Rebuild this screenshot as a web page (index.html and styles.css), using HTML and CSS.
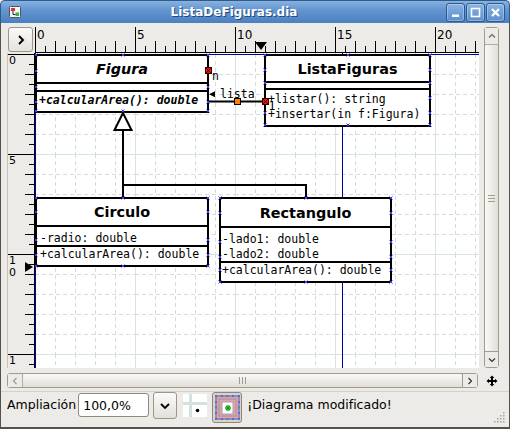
FILE: index.html
```html
<!DOCTYPE html>
<html lang="es">
<head>
<meta charset="utf-8">
<title>ListaDeFiguras.dia</title>
<link rel="stylesheet" href="styles.css">
</head>
<body>
<div class="window">
  <header class="titlebar">
    <svg class="app-icon" viewBox="0 0 14 14">
      <rect x="1.5" y="1.5" width="11" height="11" rx="1" fill="#f4f4f4" stroke="#555"/>
      <rect x="3" y="3" width="4" height="3" fill="#d33"/>
      <rect x="7.5" y="7.5" width="3.5" height="3.5" fill="#4a4"/>
      <path d="M5 6v3.5h2.5" stroke="#225" fill="none"/>
    </svg>
    <div class="title">ListaDeFiguras.dia</div>
    <div class="wm">
      <span class="wm-btn"><svg viewBox="0 0 15 15"><rect x="4" y="9.5" width="7" height="2.5" fill="#fff"/></svg></span>
      <span class="wm-btn"><svg viewBox="0 0 15 15"><rect x="3.5" y="3.5" width="8" height="8" fill="none" stroke="#fff" stroke-width="1.6"/></svg></span>
      <span class="wm-btn"><svg viewBox="0 0 15 15"><path d="M4 4l7 7M11 4l-7 7" stroke="#fff" stroke-width="2.3"/></svg></span>
    </div>
  </header>

  <div class="frame">
    <div class="workspace">
      <div class="corner-btn"><svg viewBox="0 0 10 10"><path d="M3 1l4 4-4 4" fill="none" stroke="#000" stroke-width="2"/></svg></div>

      <div class="hruler">
        <div class="hr-cell">0</div>
        <div class="hr-cell">5</div>
        <div class="hr-cell">10</div>
        <div class="hr-cell">15</div>
        <div class="hr-cell">20</div>
        <span class="hr-marker"></span>
      </div>

      <div class="vscroll">
        <div class="sb-btn sb-up"><svg viewBox="0 0 8 8"><path d="M1 5.5l3-3 3 3" fill="none" stroke="#666" stroke-width="1.2"/></svg></div>
        <div class="sb-thumb sb-thumb-v"><span class="grip-v"></span></div>
        <div class="sb-btn sb-down"><svg viewBox="0 0 8 8"><path d="M1 2.5l3 3 3-3" fill="none" stroke="#333" stroke-width="1.2"/></svg></div>
      </div>

      <div class="vruler">
        <div class="vr-cell">0</div>
        <div class="vr-cell">5</div>
        <div class="vr-cell">1<br>0</div>
        <div class="vr-cell">1</div>
        <span class="vr-marker"></span>
      </div>

      <div class="canvas">
        <svg class="grid" width="444" height="315">
          <defs>
            <pattern id="g" width="100" height="100" patternUnits="userSpaceOnUse" x="0" y="1">
              <path d="M20.5 0V100M40.5 0V100M60.5 0V100M80.5 0V100M0 20.5H100M0 40.5H100M0 60.5H100M0 80.5H100" stroke="#d2dede" stroke-dasharray="4 3" fill="none"/>
              <path d="M0.5 0V100M0 0.5H100" stroke="#d6e3e3" fill="none"/>
            </pattern>
          </defs>
          <rect width="444" height="315" fill="url(#g)"/>
          <path d="M0.5 0V315M0 1.5H444M307.5 0V315" stroke="#00009c" fill="none"/>
        </svg>

        <div class="uml figura">
          <div class="uml-name abstract">Figura</div>
          <div class="uml-attrs"></div>
          <div class="uml-ops"><div class="row abstract-op">+calcularArea(): double</div></div>
        </div>

        <div class="uml lista">
          <div class="uml-name">ListaFiguras</div>
          <div class="uml-attrs"></div>
          <div class="uml-ops">
            <div class="row">+listar(): string</div>
            <div class="row">+insertar(in f:Figura)</div>
          </div>
        </div>

        <div class="uml circulo">
          <div class="uml-name">Circulo</div>
          <div class="uml-attrs"><div class="row">-radio: double</div></div>
          <div class="uml-ops"><div class="row">+calcularArea(): double</div></div>
        </div>

        <div class="uml rect">
          <div class="uml-name">Rectangulo</div>
          <div class="uml-attrs">
            <div class="row">-lado1: double</div>
            <div class="row">-lado2: double</div>
          </div>
          <div class="uml-ops"><div class="row">+calcularArea(): double</div></div>
        </div>

        <svg class="overlay" width="444" height="315">
          <path d="M88 77V144M87 132H272M271 131V144" stroke="#000" stroke-width="2" fill="none"/>
          <polygon points="88,60 79.5,77 96.5,77" fill="#fff" stroke="#000" stroke-width="2"/>
          <path d="M174 48.5H229" stroke="#000" stroke-width="2"/>
          <polygon points="174,41.2 180,38.3 180,44.2" fill="#000"/>
          <text class="lbl" x="177" y="27">n</text>
          <text class="lbl" x="185" y="45.3">lista</text>
          <text class="lbl" x="233.5" y="57">1</text>
          <path class="cp" d="M-0.5 0.5l3 3m0-3l-3 3M86.5 0.5l3 3m0-3l-3 3M171.5 0.5l3 3m0-3l-3 3M-0.5 16.5l3 3m0-3l-3 3M-0.5 32.5l3 3m0-3l-3 3M-0.5 47.5l3 3m0-3l-3 3M171.5 32.5l3 3m0-3l-3 3M171.5 47.5l3 3m0-3l-3 3M-0.5 56.5l3 3m0-3l-3 3M86.5 56.5l3 3m0-3l-3 3M171.5 56.5l3 3m0-3l-3 3 M228.5 0.5l3 3m0-3l-3 3M311.5 0.5l3 3m0-3l-3 3M393.5 0.5l3 3m0-3l-3 3M228.5 15.5l3 3m0-3l-3 3M228.5 28.5l3 3m0-3l-3 3M228.5 58.5l3 3m0-3l-3 3M393.5 15.5l3 3m0-3l-3 3M393.5 28.5l3 3m0-3l-3 3M393.5 43.5l3 3m0-3l-3 3M393.5 58.5l3 3m0-3l-3 3M228.5 70.5l3 3m0-3l-3 3M311.5 70.5l3 3m0-3l-3 3M393.5 70.5l3 3m0-3l-3 3 M-0.5 143.5l3 3m0-3l-3 3M86.5 143.5l3 3m0-3l-3 3M171.5 143.5l3 3m0-3l-3 3M-0.5 157.5l3 3m0-3l-3 3M-0.5 185.5l3 3m0-3l-3 3M-0.5 200.5l3 3m0-3l-3 3M171.5 157.5l3 3m0-3l-3 3M171.5 185.5l3 3m0-3l-3 3M171.5 200.5l3 3m0-3l-3 3M-0.5 211.5l3 3m0-3l-3 3M86.5 211.5l3 3m0-3l-3 3M171.5 211.5l3 3m0-3l-3 3 M183.5 143.5l3 3m0-3l-3 3M269.5 143.5l3 3m0-3l-3 3M354.5 143.5l3 3m0-3l-3 3M183.5 158.5l3 3m0-3l-3 3M183.5 187.5l3 3m0-3l-3 3M183.5 202.5l3 3m0-3l-3 3M183.5 215.5l3 3m0-3l-3 3M354.5 158.5l3 3m0-3l-3 3M354.5 187.5l3 3m0-3l-3 3M354.5 202.5l3 3m0-3l-3 3M354.5 215.5l3 3m0-3l-3 3M183.5 227.5l3 3m0-3l-3 3M269.5 227.5l3 3m0-3l-3 3M354.5 227.5l3 3m0-3l-3 3"/>
          <g class="handle">
            <rect x="170.5" y="14.5" width="6" height="6"/>
            <path d="M171 15l5 5M176 15l-5 5"/>
          </g>
          <g class="handle">
            <rect x="227.5" y="45.5" width="6" height="6"/>
            <path d="M228 46l5 5M233 46l-5 5"/>
          </g>
          <rect x="199.5" y="45.5" width="6" height="6" fill="#ff8000" stroke="#000"/>
        </svg>
      </div>

      <div class="hscroll">
        <div class="sb-btn sb-left"><svg viewBox="0 0 8 8"><path d="M5.5 1l-3 3 3 3" fill="none" stroke="#999" stroke-width="1.2"/></svg></div>
        <div class="sb-thumb sb-thumb-h"><span class="grip-h"></span></div>
        <div class="sb-btn sb-right"><svg viewBox="0 0 8 8"><path d="M2.5 1l3 3-3 3" fill="none" stroke="#333" stroke-width="1.2"/></svg></div>
      </div>

      <div class="move">
        <svg viewBox="0 0 12 12" width="12" height="12">
          <path d="M6 0.5L8.3 3H3.7zM6 11.5L8.3 9H3.7zM0.5 6L3 3.7V8.3zM11.5 6L9 3.7V8.3z" fill="#000"/>
          <path d="M6 2.5V9.5M2.5 6H9.5" stroke="#000" stroke-width="2"/>
        </svg>
      </div>
    </div>

    <div class="status">
      <span class="zoom-label">Ampliación</span>
      <div class="zoom-entry">100,0%</div>
      <div class="zoom-drop"><svg viewBox="0 0 12 12" width="12" height="12"><path d="M2 4l4 4 4-4" fill="none" stroke="#000" stroke-width="1.8"/></svg></div>
      <div class="grid-toggle">
        <svg viewBox="0 0 24 23" width="24" height="23">
          <rect width="24" height="23" fill="#fff"/>
          <rect x="6" y="0" width="3" height="23" fill="#d5e1e1"/>
          <rect x="0" y="8" width="24" height="3" fill="#d5e1e1"/>
          <circle cx="14.5" cy="16.5" r="1.8" fill="#000"/>
        </svg>
      </div>
      <div class="snap-toggle">
        <svg viewBox="0 0 25 25" width="25" height="25">
          <rect x="1" y="1" width="23" height="23" fill="#e9a39c" stroke="#7a86a8" stroke-width="1.6"/>
          <rect x="4" y="4" width="17" height="17" fill="none" stroke="#8e96b8" stroke-width="1"/>
          <rect x="7" y="7" width="11" height="12" fill="#fff" stroke="#9aa3c0" stroke-width="1"/>
          <circle cx="13" cy="13" r="2.5" fill="#2fd02f" stroke="#168016" stroke-width=".6"/>
          <path d="M11.7 11.7l2.6 2.6M14.3 11.7l-2.6 2.6" stroke="#105010" stroke-width=".6"/>
          <path d="M0 0l2 2m0-2l-2 2M6 0l2 2m0-2l-2 2M11.5 0l2 2m0-2l-2 2M17 0l2 2m0-2l-2 2M23 0l2 2m0-2l-2 2M0 6l2 2m0-2l-2 2M23 6l2 2m0-2l-2 2M0 11.5l2 2m0-2l-2 2M23 11.5l2 2m0-2l-2 2M0 17l2 2m0-2l-2 2M23 17l2 2m0-2l-2 2M0 23l2 2m0-2l-2 2M6 23l2 2m0-2l-2 2M11.5 23l2 2m0-2l-2 2M17 23l2 2m0-2l-2 2M23 23l2 2m0-2l-2 2" stroke="#4a5cff" stroke-width=".8"/>
        </svg>
      </div>
      <span class="status-text">¡Diagrama modificado!</span>
    </div>

    <svg class="resize-grip" viewBox="0 0 12 12" width="12" height="12">
      <g fill="#a8a196">
        <rect x="9" y="1" width="1.5" height="1.5"/>
        <rect x="6" y="4" width="1.5" height="1.5"/><rect x="9" y="4" width="1.5" height="1.5"/>
        <rect x="3" y="7" width="1.5" height="1.5"/><rect x="6" y="7" width="1.5" height="1.5"/><rect x="9" y="7" width="1.5" height="1.5"/>
        <rect x="0" y="10" width="1.5" height="1.5"/><rect x="3" y="10" width="1.5" height="1.5"/><rect x="6" y="10" width="1.5" height="1.5"/><rect x="9" y="10" width="1.5" height="1.5"/>
      </g>
    </svg>
  </div>
</div>
</body>
</html>
```

FILE: styles.css
```css
* { box-sizing: border-box; }
html, body { margin: 0; padding: 0; }
body {
  width: 510px;
  height: 429px;
  overflow: hidden;
  background: #edebe7;
  font-family: "DejaVu Sans", sans-serif;
  color: #000;
}
.window {
  width: 510px;
  height: 429px;
  display: flex;
  flex-direction: column;
}

/* ---------- title bar ---------- */
.titlebar {
  height: 23px;
  flex: none;
  display: flex;
  align-items: center;
  padding: 0 4px 0 7px;
  background: linear-gradient(#88b2df, #6396d1 40%, #4b80c1);
  border: 1px solid #2f5a8c;
  border-bottom: none;
  border-radius: 5px 5px 0 0;
}
.app-icon { width: 14px; height: 14px; flex: none; }
.title {
  flex: 1;
  text-align: center;
  color: #fff;
  font-weight: bold;
  font-size: 12px;
  text-shadow: 1px 1px 0 #24487a;
}
.wm { display: flex; gap: 1px; }
.wm-btn {
  width: 19px;
  height: 19px;
  border: 1px solid #2c5990;
  border-radius: 3px;
  background: linear-gradient(#8ab4e2, #5b8fcc);
  box-shadow: inset 0 0 0 1px rgba(255,255,255,.3);
  display: flex;
  align-items: center;
  justify-content: center;
}
.wm-btn svg { width: 15px; height: 15px; }

/* ---------- frame ---------- */
.frame {
  flex: 1;
  position: relative;
  border: 1px solid #55524d;
  border-top: none;
  border-bottom-width: 2px;
  display: flex;
  flex-direction: column;
}
.workspace {
  display: grid;
  grid-template-columns: 28px 444px 5px 15px;
  grid-template-rows: 26px 315px 5px 15px;
  margin: 4px 0 0 6px;
}

.corner-btn {
  grid-column: 1;
  grid-row: 1;
  margin: 0 2px 1px 1px;
  border: 1px solid #9c958a;
  border-radius: 3px;
  background: linear-gradient(#fbfaf9, #e6e2dc);
  display: flex;
  align-items: center;
  justify-content: center;
}
.corner-btn svg { width: 10px; height: 10px; }

/* ---------- rulers ---------- */
.hruler {
  grid-column: 2;
  grid-row: 1;
  position: relative;
  display: flex;
  overflow: hidden;
  border-bottom: 1px solid #000;
  background:
    repeating-linear-gradient(to right, #000 0 1px, transparent 1px 20px) left bottom / 100% 11px no-repeat,
    repeating-linear-gradient(to right, transparent 0 10px, #000 10px 11px, transparent 11px 20px) left bottom / 100% 6px no-repeat,
    #edebe7;
}
.hr-cell {
  flex: none;
  width: 100px;
  height: 100%;
  border-left: 1px solid #000;
  padding: 1px 0 0 1px;
  font-size: 12px;
  line-height: 14px;
}
.hr-marker {
  position: absolute;
  left: 220px;
  top: 15px;
  width: 0;
  height: 0;
  border-left: 6px solid transparent;
  border-right: 6px solid transparent;
  border-top: 8px solid #000;
}

.vruler {
  grid-column: 1;
  grid-row: 2;
  position: relative;
  overflow: hidden;
  padding-top: 1px;
  border-left: 1px solid #c9c4bb;
  border-right: 1px solid #000;
  background:
    repeating-linear-gradient(to bottom, transparent 0 1px, #000 1px 2px, transparent 2px 20px) right top / 9px 100% no-repeat,
    repeating-linear-gradient(to bottom, transparent 0 11px, #000 11px 12px, transparent 12px 20px) right top / 5px 100% no-repeat,
    #edebe7;
}
.vr-cell {
  height: 100px;
  border-top: 1px solid #000;
  padding-left: 1px;
  font-size: 11px;
  line-height: 12px;
}
.vr-marker {
  position: absolute;
  left: 17px;
  top: 209px;
  width: 0;
  height: 0;
  border-top: 5px solid transparent;
  border-bottom: 5px solid transparent;
  border-left: 8px solid #000;
}

/* ---------- canvas ---------- */
.canvas {
  grid-column: 2;
  grid-row: 2;
  position: relative;
  overflow: hidden;
  background: #fff;
}
.grid, .overlay { position: absolute; left: 0; top: 0; }
.overlay { z-index: 2; }

.uml {
  position: absolute;
  z-index: 1;
  border: 2px solid #000;
  background: #fff;
  display: flex;
  flex-direction: column;
}
.uml-name {
  flex: none;
  display: flex;
  align-items: center;
  justify-content: center;
  border-bottom: 2px solid #000;
  font-weight: bold;
  font-size: 14.4px;
}
.uml-name.abstract { font-style: italic; }
.uml-attrs {
  flex: none;
  border-bottom: 2px solid #000;
  padding-top: 4px;
}
.uml-ops { flex: 1; padding-top: 1px; }
.row {
  font-family: "DejaVu Sans Mono", monospace;
  font-size: 11.5px;
  line-height: 15.6px;
  white-space: pre;
  height: 15.6px;
}
.abstract-op { font-weight: bold; font-style: italic; }

.figura { left: 0; top: 1px; width: 174px; height: 59px; }
.figura .uml-name { height: 28px; }
.figura .uml-attrs { height: 8px; }
.figura .row { padding-left: 2px; }

.lista { left: 229px; top: 1px; width: 167px; height: 73px; }
.lista .uml-name { height: 27px; }
.lista .uml-attrs { height: 7px; }
.lista .uml-ops { padding-top: 1.5px; }
.lista .row { padding-left: 2px; }

.circulo { left: 0; top: 144px; width: 174px; height: 70px; }
.circulo .uml-name { height: 28px; }
.circulo .uml-attrs { height: 20px; }
.circulo .uml-ops { padding-top: 0; }
.circulo .row { padding-left: 3px; }

.rect { left: 184px; top: 144px; width: 173px; height: 86px; }
.rect .uml-name { height: 29px; }
.rect .uml-attrs { height: 35px; padding-top: 3.5px; }
.rect .uml-ops { padding-top: 0; }
.rect .row { padding-left: 1px; }

.lbl {
  font-family: "DejaVu Sans Mono", monospace;
  font-size: 11.5px;
  fill: #000;
}
.cp { stroke: #3b3bff; stroke-width: 1; fill: none; }
.handle rect { fill: #ff1010; stroke: #300; stroke-width: 1; }
.handle path { stroke: #200; stroke-width: .8; }

/* ---------- scrollbars ---------- */
.vscroll {
  grid-column: 4;
  grid-row: 1 / 3;
  display: flex;
  flex-direction: column;
  border: 1px solid #a39c8e;
  border-radius: 3px;
  background: #e4e0da;
}
.hscroll {
  grid-column: 1 / 3;
  grid-row: 4;
  margin-right: 1px;
  display: flex;
  border: 1px solid #a39c8e;
  border-radius: 3px;
  background: #e4e0da;
}
.sb-btn {
  flex: none;
  display: flex;
  align-items: center;
  justify-content: center;
  background: #edebe7;
}
.sb-btn svg { width: 8px; height: 8px; }
.sb-up { height: 17px; border-bottom: 1px solid #b3ac9f; }
.sb-down { height: 16px; border-top: 1px solid #a39c8e; }
.sb-left { width: 15px; border-right: 1px solid #b3ac9f; }
.sb-right { width: 15px; border-left: 1px solid #a39c8e; }
.sb-thumb {
  flex: 1;
  display: flex;
  align-items: center;
  justify-content: center;
  border-radius: 2px;
}
.sb-thumb-v { background: linear-gradient(to right, #fbfaf8, #e2ded7); }
.sb-thumb-h { background: linear-gradient(#fbfaf8, #e2ded7); }
.grip-v {
  width: 7px;
  height: 7px;
  background: repeating-linear-gradient(to bottom, #a39c8e 0 1px, transparent 1px 3px);
}
.grip-h {
  width: 7px;
  height: 7px;
  background: repeating-linear-gradient(to right, #a39c8e 0 1px, transparent 1px 3px);
}
.move {
  grid-column: 4;
  grid-row: 4;
  display: flex;
  align-items: center;
  justify-content: center;
}

/* ---------- status bar ---------- */
.status {
  display: flex;
  align-items: flex-start;
  height: 31px;
  margin-top: 3px;
  border-top: 1px solid #d6d1ca;
  padding-left: 6px;
  font-size: 12.5px;
  line-height: 15px;
}
.zoom-label { margin-top: 5px; }
.zoom-entry {
  margin: 1px 0 0 2px;
  width: 71px;
  height: 24px;
  border: 1px solid #8e887e;
  border-radius: 3px;
  background: #fff;
  padding: 4px 0 0 4px;
}
.zoom-drop {
  margin-left: 4px;
  width: 24px;
  height: 27px;
  border: 1px solid #9d968a;
  border-radius: 3px;
  background: linear-gradient(#fbfaf9, #e4e0da);
  display: flex;
  align-items: center;
  justify-content: center;
}
.grid-toggle { margin: 2px 0 0 6px; width: 24px; height: 23px; }
.grid-toggle svg { display: block; }
.snap-toggle {
  margin-left: 5px;
  width: 30px;
  height: 31px;
  border: 1px solid #8d8679;
  border-radius: 3px;
  background: #d8d3cb;
  display: flex;
  align-items: center;
  justify-content: center;
}
.status-text { margin: 5px 0 0 5px; }
.resize-grip {
  position: absolute;
  right: 3px;
  bottom: 4px;
}
```
